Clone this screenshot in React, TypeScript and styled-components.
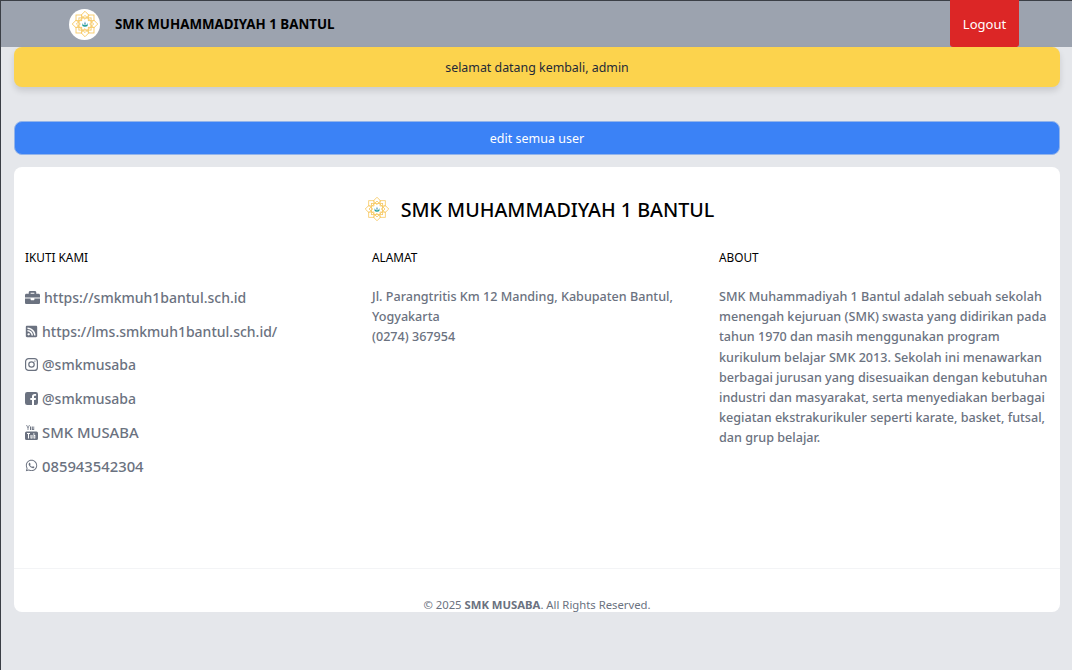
import React from "react";
import styled, { createGlobalStyle } from "styled-components";
import { FaBriefcase, FaRssSquare, FaWhatsapp } from "react-icons/fa";

const GlobalStyle = createGlobalStyle`
  html, body {
    margin: 0;
    padding: 0;
    height: 100%;
    background: #e5e7eb;
    font-family: "Noto Sans", "Open Sans", sans-serif;
    overflow: hidden;
  }
`;

const Page = styled.div`
  height: 669px;
  border-top: 1px solid #3b3f46;
  border-left: 1px solid #3b3f46;
`;

const Navbar = styled.header`
  height: 46px;
  background: #9ca3af;
  display: flex;
  align-items: center;
  padding-left: 68px;
  padding-right: 53px;
`;

const LogoCircle = styled.div`
  width: 31px;
  height: 31px;
  border-radius: 50%;
  background: #fff;
  display: flex;
  align-items: center;
  justify-content: center;
  margin-right: 15px;
`;

const BrandName = styled.span`
  font-size: 13.35px;
  font-weight: 700;
  color: #000;
  flex: 1;
`;

const LogoutButton = styled.button`
  width: 69px;
  height: 47px;
  margin-top: -1px;
  padding: 0;
  border: none;
  border-radius: 0 0 3px 3px;
  background: #dc2626;
  color: #fff;
  font-family: inherit;
  font-size: 13px;
`;

const Content = styled.main`
  padding: 0 12px 0 13px;
`;

const WelcomeBar = styled.div`
  height: 40px;
  background: #fcd34d;
  border-radius: 8px;
  box-shadow: 0 4px 6px rgba(0, 0, 0, 0.12);
  display: flex;
  align-items: center;
  justify-content: center;
  font-size: 12.4px;
  color: #1f2937;
`;

const EditButton = styled.button`
  display: block;
  width: 100%;
  height: 34px;
  margin-top: 34px;
  border: 1px solid #93b4ea;
  border-radius: 8px;
  background: #3b82f6;
  color: #fff;
  font-family: inherit;
  font-size: 12.5px;
`;

const Card = styled.section`
  height: 445px;
  margin-top: 12px;
  background: #fff;
  border-radius: 8px;
  display: flex;
  flex-direction: column;
`;

const CardTitle = styled.div`
  display: flex;
  align-items: center;
  justify-content: center;
  gap: 12px;
  height: 30px;
  margin-top: 27px;
  padding-left: 5px;
  font-size: 19.7px;
  font-weight: 500;
  color: #000;
`;

const Columns = styled.div`
  display: grid;
  grid-template-columns: repeat(3, 347px);
  flex: 1;
  margin-top: 25px;
  padding-left: 1px;
`;

const Column = styled.div`
  padding: 0 6px 0 10px;
`;

const ColumnHeading = styled.h4`
  margin: 0 0 16px;
  font-size: 11.8px;
  line-height: 16px;
  font-weight: 400;
  color: #000;
`;

const LinkList = styled.ul`
  list-style: none;
  margin: 0;
  padding: 0;
`;

const LinkRow = styled.li<{ $large?: boolean }>`
  display: flex;
  align-items: center;
  gap: 4px;
  height: 33.6px;
  font-size: ${(props) => (props.$large ? "14.8px" : "14px")};
  font-weight: 500;
  color: #6b7280;
  svg {
    flex: none;
  }
`;

const BodyText = styled.p`
  margin: 0;
  padding-top: 6px;
  font-size: 12.6px;
  line-height: 20.2px;
  font-weight: 500;
  color: #6b7280;
`;

const Footer = styled.footer`
  height: 44px;
  border-top: 1px solid #f3f4f6;
  box-sizing: border-box;
  padding-top: 27px;
  text-align: center;
  font-size: 11.3px;
  line-height: 18px;
  color: #6b7280;
  b {
    font-weight: 700;
  }
`;

const petalAngles = [0, 45, 90, 135, 180, 225, 270, 315];

const Logo: React.FC<{ size: number }> = ({ size }) => (
  <svg width={size} height={size} viewBox="0 0 32 32" fill="none">
    <g stroke="#f7c964" strokeWidth="1.1">
      {petalAngles.map((angle) => (
        <rect key={angle} x="12.500" y="1.800" width="7" height="7" transform={`rotate(${angle} 16 16) rotate(45 16 5.300)`} />
      ))}
      <rect x="8.500" y="8.500" width="15" height="15" />
      <rect x="8.500" y="8.500" width="15" height="15" transform="rotate(45 16 16)" />
    </g>
    <circle cx="16" cy="16" r="4.800" fill="#fff" />
    <path d="M12.800 14.500c.5 2.200 1.600 3 3.200 3s2.700-.8 3.200-3v4c-.9.700-2 1-3.200 1s-2.300-.3-3.200-1z" fill="#1a9a93" />
    <path d="M16 12.500l1 4h-2z" fill="#2b7fa8" />
  </svg>
);

const InstagramIcon = () => (
  <svg width="13" height="13" viewBox="0 0 13 13" fill="none" stroke="#6b7280" strokeWidth="1.2">
    <rect x="0.600" y="0.600" width="11.800" height="11.800" rx="3" />
    <circle cx="6.500" cy="6.500" r="2.700" />
    <circle cx="9.900" cy="3.100" r="0.700" fill="#6b7280" stroke="none" />
  </svg>
);

const FacebookIcon = () => (
  <svg width="13" height="13" viewBox="0 0 13 13">
    <path
      fill="#6b7280"
      d="M2.200 0h8.600A2.200 2.200 0 0 1 13 2.200v8.600a2.200 2.200 0 0 1-2.200 2.200H9V8h1.700l.3-2H9V4.800c0-.6.300-1 1-1h1.100V2c-.4 0-.9-.1-1.500-.1C8 1.900 7 2.900 7 4.500V6H5.300v2H7v5H2.200A2.200 2.200 0 0 1 0 10.800V2.200A2.200 2.200 0 0 1 2.200 0z"
    />
  </svg>
);

const YoutubeIcon = () => (
  <svg width="13" height="15" viewBox="0 0 13 15" fill="#6b7280">
    <path d="M2 0l1 2.500L4 0h.8L3.400 3.200V5h-.8V3.200L1.200 0zM5 1.500h1.300v3.500H5zM7 1.500h.8V4.300h.6V1.500h.8V5H7z" />
    <path d="M1.500 6.500h10A1.500 1.500 0 0 1 13 8v5.500a1.500 1.500 0 0 1-1.500 1.500h-10A1.500 1.500 0 0 1 0 13.500V8a1.500 1.500 0 0 1 1.500-1.500zM2 8v1h1v4.500h1V9h1V8zm3.500 2v3.500h2V10h-.8v2.800h-.4V10zm3 -2v5.500h1.800V10H9.300V8zm.8 3h.3v1.800h-.3z" fillRule="evenodd" />
  </svg>
);

const links = [
  { icon: <FaBriefcase size={15} />, text: "https://smkmuh1bantul.sch.id" },
  { icon: <FaRssSquare size={13} />, text: "https://lms.smkmuh1bantul.sch.id/" },
  { icon: <InstagramIcon />, text: "@smkmusaba" },
  { icon: <FacebookIcon />, text: "@smkmusaba" },
  { icon: <YoutubeIcon />, text: "SMK MUSABA", large: true },
  { icon: <FaWhatsapp size={13} />, text: "085943542304", large: true },
];

const App: React.FC = () => (
  <Page>
    <GlobalStyle />
    <Navbar>
      <LogoCircle>
        <Logo size={26} />
      </LogoCircle>
      <BrandName>SMK MUHAMMADIYAH 1 BANTUL</BrandName>
      <LogoutButton>Logout</LogoutButton>
    </Navbar>
    <Content>
      <WelcomeBar>selamat datang kembali, admin</WelcomeBar>
      <EditButton>edit semua user</EditButton>
      <Card>
        <CardTitle>
          <Logo size={24} />
          SMK MUHAMMADIYAH 1 BANTUL
        </CardTitle>
        <Columns>
          <Column>
            <ColumnHeading>IKUTI KAMI</ColumnHeading>
            <LinkList>
              {links.map((link, i) => (
                <LinkRow key={i} $large={link.large}>
                  {link.icon}
                  {link.text}
                </LinkRow>
              ))}
            </LinkList>
          </Column>
          <Column>
            <ColumnHeading>ALAMAT</ColumnHeading>
            <BodyText>
              Jl. Parangtritis Km 12 Manding, Kabupaten Bantul, Yogyakarta
              <br />
              (0274) 367954
            </BodyText>
          </Column>
          <Column>
            <ColumnHeading>ABOUT</ColumnHeading>
            <BodyText>
              SMK Muhammadiyah 1 Bantul adalah sebuah sekolah menengah kejuruan (SMK) swasta yang didirikan pada
              tahun 1970 dan masih menggunakan program kurikulum belajar SMK 2013. Sekolah ini menawarkan berbagai
              jurusan yang disesuaikan dengan kebutuhan industri dan masyarakat, serta menyediakan berbagai kegiatan
              ekstrakurikuler seperti karate, basket, futsal, dan grup belajar.
            </BodyText>
          </Column>
        </Columns>
        <Footer>
          © 2025 <b>SMK MUSABA</b>. All Rights Reserved.
        </Footer>
      </Card>
    </Content>
  </Page>
);

export default App;
